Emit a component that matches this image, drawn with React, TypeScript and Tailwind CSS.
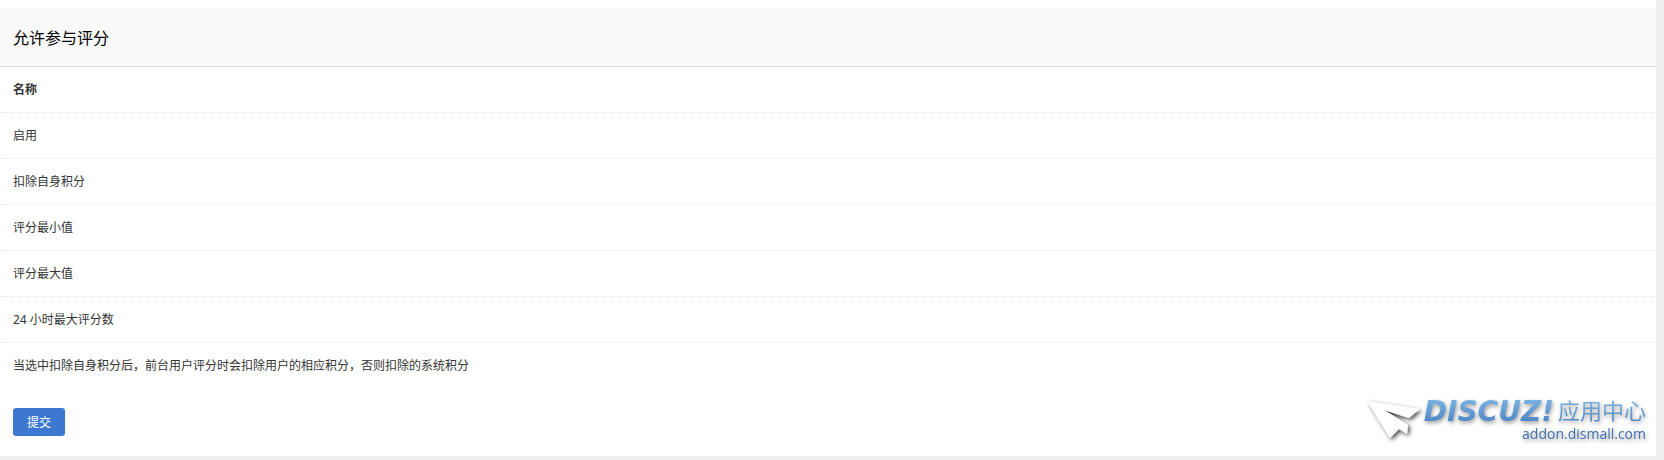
import React from "react";

const rows = [
  "启用",
  "扣除自身积分",
  "评分最小值",
  "评分最大值",
  "24 小时最大评分数",
];

// Paper plane mark of the addon center
const PlaneIcon = () => (
  <svg width="61" height="52" viewBox="0 0 61 52" aria-hidden="true">
    <defs>
      <linearGradient id="planeFold" x1="0" y1="0" x2="1" y2="0.6">
        <stop offset="0" stopColor="#4a4a4a" />
        <stop offset="0.5" stopColor="#b4b4b4" />
        <stop offset="1" stopColor="#ffffff" />
      </linearGradient>
      <filter id="planeShadow" x="-20%" y="-20%" width="150%" height="150%">
        <feDropShadow dx="2" dy="2" stdDeviation="2" floodColor="#000" floodOpacity="0.7" />
      </filter>
    </defs>
    <path d="M21 14 46 22 44 27Z" fill="url(#planeFold)" />
    <g filter="url(#planeShadow)">
      <path d="M4 5 57 13 46 22 21 14 45 29 44 38 36 33 27 42Z" fill="#fff" />
    </g>
    <path d="M36 33 27 42 31 34Z" fill="#ececec" />
  </svg>
);

const AddonLogo = () => {
  return (
    <div className="pointer-events-none absolute right-[10px] bottom-2 flex items-start">
      <PlaneIcon />
      <div className="flex flex-col items-end pt-0.5 drop-shadow-[1px_2px_2px_rgba(0,0,0,0.4)]">
        <div className="flex items-start gap-1 h-7 bg-linear-to-b from-[#7db4e4] to-[#4680bf] bg-clip-text text-transparent">
          <span className="font-['DejaVu_Sans',sans-serif] text-[28px] leading-7 font-bold italic">
            DISCUZ!
          </span>
          <span className="text-[22px] leading-6">应用中心</span>
        </div>
        <span className="font-['Open_Sans',sans-serif] text-[14px] leading-4 text-[#3f72ae]">
          addon.dismall.com
        </span>
      </div>
    </div>
  );
};

const App = () => {
  return (
    <div className="bg-[#efefef] pr-2 pb-1 font-['Noto_Sans','Noto_Sans_CJK_SC',sans-serif] text-xs text-[#333]">
      <form
        className="relative bg-white pt-[9px] pb-5"
        onSubmit={(e) => e.preventDefault()}
      >
        <table className="w-full border-separate border-spacing-0 text-left">
          <caption className="h-[58px] border-b border-[#dcdcdc] bg-[#f9f9f9] px-[13px] text-left text-base leading-[59px] text-black">
            允许参与评分
          </caption>
          <thead>
            <tr>
              <th className="h-[46px] border-b border-dotted border-[#e2eaea] px-[13px] font-bold">
                名称
              </th>
            </tr>
          </thead>
          <tbody>
            {rows.map((name) => (
              <tr key={name}>
                <th
                  scope="row"
                  className="h-[46px] border-b border-dotted border-[#e2eaea] px-[13px] font-normal"
                >
                  {name}
                </th>
              </tr>
            ))}
            <tr>
              <td className="h-[46px] px-[13px]">
                当选中扣除自身积分后，前台用户评分时会扣除用户的相应积分，否则扣除的系统积分
              </td>
            </tr>
          </tbody>
        </table>
        <div className="px-[13px] pt-[19px]">
          <button
            type="submit"
            className="block h-7 w-[52px] rounded-[3px] bg-[#3c78d0] pt-0.5 text-xs text-white"
          >
            提交
          </button>
        </div>
        <AddonLogo />
      </form>
    </div>
  );
};

export default App;
